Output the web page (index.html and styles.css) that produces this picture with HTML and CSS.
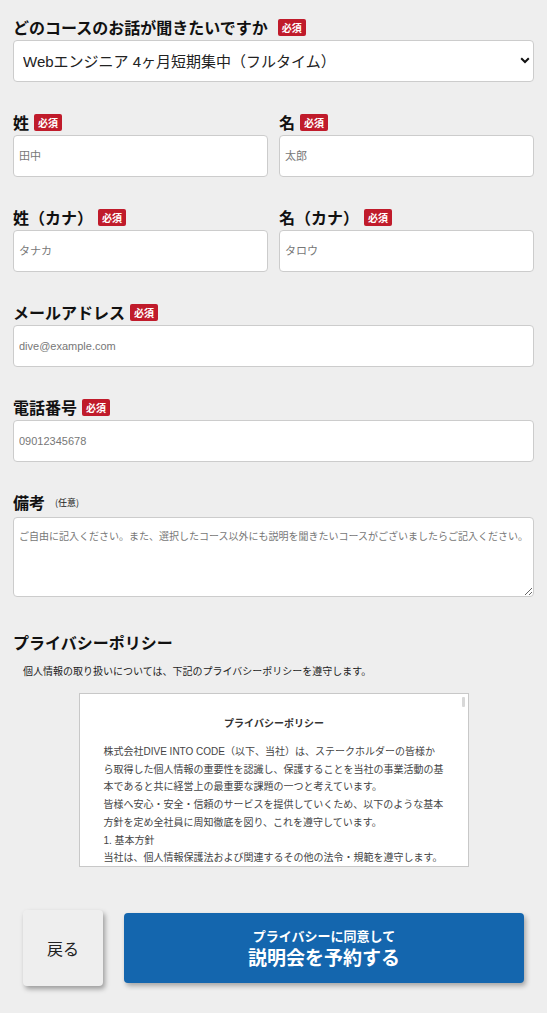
FILE: index.html
```html
<!DOCTYPE html>
<html lang="ja">
<head>
<meta charset="utf-8">
<title>説明会予約</title>
<link rel="stylesheet" href="styles.css">
</head>
<body>
<form class="form">
  <div class="field">
    <div class="label">どのコースのお話が聞きたいですか<span class="badge badge-wide">必須</span></div>
    <div class="select-wrap">
      <select class="select">
        <option>Webエンジニア 4ヶ月短期集中（フルタイム）</option>
      </select>
      <svg class="chevron" width="10" height="7" viewBox="0 0 10 7"><path d="M1.2 1.3 L5 5 L8.8 1.3" fill="none" stroke="#111" stroke-width="2"/></svg>
    </div>
  </div>

  <div class="row">
    <div class="field">
      <div class="label">姓<span class="badge">必須</span></div>
      <input class="input" type="text" placeholder="田中">
    </div>
    <div class="field">
      <div class="label">名<span class="badge">必須</span></div>
      <input class="input" type="text" placeholder="太郎">
    </div>
  </div>

  <div class="row">
    <div class="field">
      <div class="label">姓（カナ）<span class="badge">必須</span></div>
      <input class="input" type="text" placeholder="タナカ">
    </div>
    <div class="field">
      <div class="label">名（カナ）<span class="badge">必須</span></div>
      <input class="input" type="text" placeholder="タロウ">
    </div>
  </div>

  <div class="field">
    <div class="label">メールアドレス<span class="badge">必須</span></div>
    <input class="input" type="email" placeholder="dive@example.com">
  </div>

  <div class="field">
    <div class="label">電話番号<span class="badge">必須</span></div>
    <input class="input" type="tel" placeholder="09012345678">
  </div>

  <div class="field field-note">
    <div class="label label-note">備考<span class="optional">(任意)</span></div>
    <textarea class="textarea" placeholder="ご自由に記入ください。また、選択したコース以外にも説明を聞きたいコースがございましたらご記入ください。"></textarea>
  </div>

  <section class="privacy">
    <h2 class="privacy-heading">プライバシーポリシー</h2>
    <p class="privacy-lead">個人情報の取り扱いについては、下記のプライバシーポリシーを遵守します。</p>
    <div class="policy-box">
      <span class="scroll-thumb"></span>
      <div class="policy-title">プライバシーポリシー</div>
      <p class="policy-text">株式会社DIVE INTO CODE（以下、当社）は、ステークホルダーの皆様から取得した個人情報の重要性を認識し、保護することを当社の事業活動の基本であると共に経営上の最重要な課題の一つと考えています。<br>皆様へ安心・安全・信頼のサービスを提供していくため、以下のような基本方針を定め全社員に周知徹底を図り、これを遵守しています。<br>1. 基本方針<br>当社は、個人情報保護法および関連するその他の法令・規範を遵守します。</p>
    </div>
  </section>

  <div class="actions">
    <button type="button" class="btn-back">戻る</button>
    <button type="submit" class="btn-submit">
      <span class="btn-sub">プライバシーに同意して</span>
      <span class="btn-main">説明会を予約する</span>
    </button>
  </div>
</form>
</body>
</html>
```

FILE: styles.css
```css
* {
  box-sizing: border-box;
}

html, body {
  margin: 0;
  padding: 0;
}

body {
  background: #eeeeee;
  font-family: "Liberation Sans", "Noto Sans CJK JP", sans-serif;
  color: #111;
}

.form {
  padding: 15px 13px 0 13px;
}

.field {
  margin-bottom: 28px;
}

.row {
  display: grid;
  grid-template-columns: 1fr 1fr;
  column-gap: 11px;
}

.label {
  display: flex;
  align-items: center;
  height: 24px;
  margin-bottom: 1px;
  font-family: "Noto Sans CJK JP", sans-serif;
  font-size: 16px;
  font-weight: bold;
  line-height: 24px;
  color: #111;
}

.badge {
  display: inline-block;
  margin-left: 5px;
  padding: 0 4px;
  height: 17px;
  line-height: 17px;
  background: #c01b2b;
  color: #fff;
  font-size: 10px;
  font-weight: bold;
  border-radius: 2px;
}

.badge-wide {
  margin-left: 10px;
}

.select-wrap {
  position: relative;
}

.select {
  display: block;
  width: 100%;
  height: 42px;
  padding: 0 30px 0 9px;
  border: 1px solid #cccccc;
  border-radius: 4px;
  background: #fff;
  font-family: "Liberation Sans", "Noto Sans CJK JP", sans-serif;
  font-size: 15px;
  color: #222;
  -webkit-appearance: none;
  appearance: none;
  outline: none;
}

.chevron {
  position: absolute;
  right: 4px;
  top: 17px;
  pointer-events: none;
}

.input {
  display: block;
  width: 100%;
  height: 42px;
  padding: 0 5px;
  border: 1px solid #cccccc;
  border-radius: 4px;
  background: #fff;
  font-family: "Liberation Sans", "Noto Sans CJK JP", sans-serif;
  font-size: 11px;
  color: #222;
  outline: none;
}

.input::placeholder,
.textarea::placeholder {
  color: #777;
  opacity: 1;
}

.label-note {
  margin-bottom: 3px;
}

.optional {
  margin-left: 10px;
  font-size: 9px;
  font-weight: normal;
  color: #222;
  position: relative;
  top: 1px;
}

.textarea {
  display: block;
  width: 100%;
  height: 80px;
  padding: 10px 5px;
  border: 1px solid #cccccc;
  border-radius: 4px;
  background: #fff;
  font-family: "Noto Sans CJK JP", sans-serif;
  font-size: 10px;
  line-height: 15px;
  color: #222;
  outline: none;
  resize: vertical;
}

.field-note {
  margin-bottom: 33px;
}

.privacy-heading {
  margin: 0 0 9px 0;
  font-family: "Noto Sans CJK JP", sans-serif;
  font-size: 16px;
  font-weight: bold;
  line-height: 24px;
  color: #111;
}

.privacy-lead {
  margin: 0 0 14px 0;
  padding-left: 10px;
  font-family: "Noto Sans CJK JP", sans-serif;
  font-size: 10px;
  line-height: 16px;
  color: #222;
}

.policy-box {
  position: relative;
  width: 390px;
  height: 174px;
  margin: 0 auto;
  padding: 20px 23px 0 24px;
  background: #fff;
  border: 1px solid #c8c8c8;
  overflow: hidden;
}

.scroll-thumb {
  position: absolute;
  right: 3px;
  top: 3px;
  width: 3px;
  height: 10px;
  background: #d8d8d8;
  border-radius: 1px;
}

.policy-title {
  margin-bottom: 11px;
  text-align: center;
  font-family: "Noto Sans CJK JP", sans-serif;
  font-size: 10px;
  font-weight: bold;
  line-height: 18px;
  color: #333;
}

.policy-text {
  margin: 0;
  font-size: 10px;
  line-height: 17.7px;
  color: #444;
}

.actions {
  display: flex;
  align-items: center;
  gap: 21px;
  padding: 0 10px;
  margin-top: 43px;
  padding-bottom: 28px;
}

.btn-back {
  flex: 0 0 80px;
  height: 76px;
  border: none;
  border-radius: 4px;
  background: #eeeeee;
  box-shadow: 2px 3px 5px rgba(0, 0, 0, 0.35);
  font-family: "Noto Sans CJK JP", sans-serif;
  font-size: 16px;
  color: #222;
  padding: 0;
}

.btn-submit {
  flex: 1 1 auto;
  height: 70px;
  display: flex;
  flex-direction: column;
  align-items: center;
  justify-content: center;
  border: none;
  border-radius: 4px;
  background: #1466ae;
  box-shadow: 2px 3px 5px rgba(0, 0, 0, 0.3);
  color: #fff;
  font-family: "Noto Sans CJK JP", sans-serif;
  font-weight: bold;
  padding: 0;
}

.btn-sub {
  font-size: 13px;
  line-height: 18px;
}

.btn-main {
  font-size: 19px;
  line-height: 24px;
}
```
